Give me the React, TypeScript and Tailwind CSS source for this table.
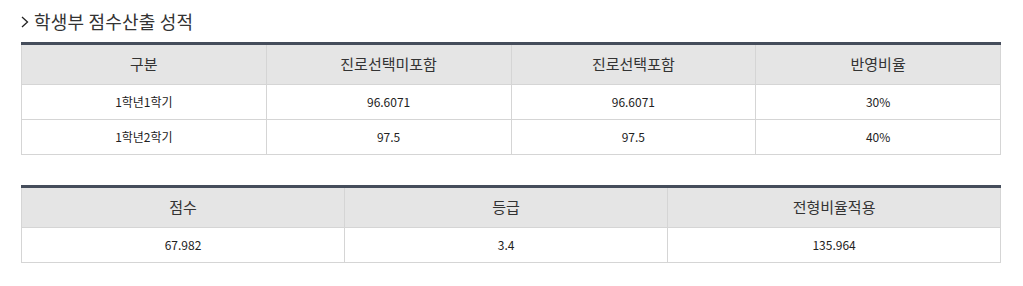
const font = { fontFamily: '"Noto Sans CJK KR", "Noto Sans", sans-serif' };

const rows1 = [
  ["1학년1학기", "96.6071", "96.6071", "30%"],
  ["1학년2학기", "97.5", "97.5", "40%"],
];

function Th({ children, w }: { children: React.ReactNode; w: string }) {
  return (
    <th className={`${w} h-[41px] border border-t-0 border-[#d5d5d5] bg-[#e5e5e5] text-center text-[15px] font-normal text-[#333]`}>
      {children}
    </th>
  );
}

function Td({ children }: { children: React.ReactNode }) {
  return (
    <td className="h-[35px] border border-[#d5d5d5] text-center text-[12px] text-[#222]">{children}</td>
  );
}

export default function App() {
  return (
    <div className="w-[1023px] h-[286px] bg-white pl-[21px] pr-[22px] pt-[9px]" style={font}>
      <h2 className="flex items-center text-[18px] leading-[24px] text-[#333] font-normal tracking-[0.2px]">
        <svg width="8" height="12" viewBox="0 0 8 12" className="mr-[5px] mt-[2px]">
          <path d="M1 1l5.5 5L1 11" fill="none" stroke="#222" strokeWidth="1.3" />
        </svg>
        학생부 점수산출 성적
      </h2>
      <table className="mt-[9px] w-full table-fixed border-collapse border-t-[3px] border-t-[#454d5b]">
        <thead>
          <tr>
            <Th w="w-[25%]">구분</Th>
            <Th w="w-[25%]">진로선택미포함</Th>
            <Th w="w-[25%]">진로선택포함</Th>
            <Th w="w-[25%]">반영비율</Th>
          </tr>
        </thead>
        <tbody>
          {rows1.map((r) => (
            <tr key={r[0]}>
              {r.map((c, i) => (
                <Td key={i}>{c}</Td>
              ))}
            </tr>
          ))}
        </tbody>
      </table>
      <table className="mt-[30px] w-full table-fixed border-collapse border-t-[3px] border-t-[#454d5b]">
        <thead>
          <tr>
            <Th w="w-[33%]">점수</Th>
            <Th w="w-[33%]">등급</Th>
            <Th w="w-[34%]">전형비율적용</Th>
          </tr>
        </thead>
        <tbody>
          <tr>
            <Td>67.982</Td>
            <Td>3.4</Td>
            <Td>135.964</Td>
          </tr>
        </tbody>
      </table>
    </div>
  );
}
